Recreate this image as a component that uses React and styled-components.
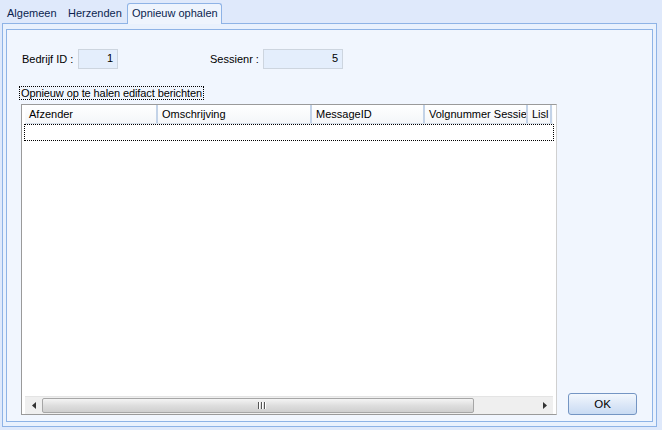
import styled, { createGlobalStyle } from 'styled-components';

const GlobalStyle = createGlobalStyle`
    html, body {
        margin: 0;
        padding: 0;
        background: #dfe9fb;
    }
    body {
        font-family: "Liberation Sans", Arial, sans-serif;
        font-size: 11px;
        color: #000;
    }
`;

const borderBlue = '#8eb3e6';

const Window = styled.div`
    width: 662px;
    height: 430px;
    background: #dfe9fb;
    display: flex;
    flex-direction: column;
    font-family: "Liberation Sans", Arial, sans-serif;
    font-size: 11px;
`;

const TabStrip = styled.div`
    height: 23px;
    display: flex;
    align-items: flex-end;
    padding-left: 2px;
    position: relative;
    z-index: 1;
`;

const Tab = styled.div`
    width: ${(p) => p.$width}px;
    height: ${(p) => (p.$active ? '21px' : '19px')};
    box-sizing: border-box;
    padding: ${(p) => (p.$active ? '3px 0 0 4px' : '2px 0 0 4px')};
    border: 1px solid ${(p) => (p.$active ? borderBlue : 'transparent')};
    border-bottom: none;
    border-radius: 3px 3px 0 0;
    background: ${(p) => (p.$active ? '#eef4fd' : 'transparent')};
    margin-bottom: ${(p) => (p.$active ? '-1px' : '0')};
    color: #0b1f4f;
    white-space: nowrap;
    font-size: 11px;
`;

const TabPage = styled.div`
    margin: 0 5px 3px 2px;
    flex: 1;
    border: 1px solid ${borderBlue};
    background: #e9f1fd;
    padding: 5px 3px 4px 3px;
    display: flex;
`;

const Panel = styled.div`
    flex: 1;
    border: 1px solid ${borderBlue};
    background: #f1f6fe;
    display: flex;
    flex-direction: column;
    padding: 19px 0 6px 12px;
`;

const FieldRow = styled.div`
    display: flex;
    align-items: center;
    height: 20px;
    padding-left: 3px;
`;

const Label = styled.span`
    width: ${(p) => p.$width}px;
    white-space: nowrap;
`;

const ValueBox = styled.div`
    width: ${(p) => p.$width}px;
    height: 20px;
    box-sizing: border-box;
    border: 1px solid #cdd5df;
    background: #e4eefc;
    text-align: right;
    padding: 2px 4px 0 0;
    margin-right: ${(p) => p.$gap || 0}px;
`;

const GroupLabel = styled.div`
    margin-top: 17px;
    align-self: flex-start;
    border: 1px dotted #000;
    padding: 0 1px;
    height: 12px;
    line-height: 12px;
    white-space: nowrap;
    letter-spacing: -0.1px;
`;

const Body = styled.div`
    flex: 1;
    display: flex;
    margin-top: 4px;
    padding-left: 2px;
`;

const ListView = styled.div`
    width: 536px;
    box-sizing: border-box;
    border: 1px solid #9a9a9a;
    border-right-color: #d0d0d0;
    background: #fff;
    display: flex;
    flex-direction: column;
`;

const HeaderRow = styled.div`
    display: flex;
    height: 18px;
    border-bottom: 1px solid #d5dde8;
    margin: 0 3px 0 3px;
    background: linear-gradient(#ffffff, #f4f6f9);
`;

const HeaderCell = styled.div`
    width: ${(p) => p.$width}px;
    box-sizing: border-box;
    padding: 3px 0 0 4px;
    border-right: 2px solid #c3d3e8;
    white-space: nowrap;
    overflow: hidden;
`;

const Rows = styled.div`
    flex: 1;
    padding: 0 2px 0 2px;
`;

const FocusRow = styled.div`
    height: 15px;
    border: 1px dotted #000;
`;

const HScroll = styled.div`
    height: 17px;
    display: flex;
    align-items: center;
    background: #efefef;
    border-top: 1px solid #e4e4e4;
    margin: 0 3px 0 3px;
`;

const Arrow = styled.div`
    width: 17px;
    height: 17px;
    display: flex;
    align-items: center;
    justify-content: center;
`;

const Track = styled.div`
    flex: 1;
    height: 15px;
    display: flex;
`;

const Thumb = styled.div`
    width: 432px;
    box-sizing: border-box;
    border: 1px solid #a6a6a6;
    border-radius: 2px;
    background: linear-gradient(#f4f4f4, #dedede 50%, #cfcfcf);
    display: flex;
    align-items: center;
    justify-content: flex-end;
    padding-right: 208px;
`;

const Grip = styled.div`
    display: flex;
    & > span {
        width: 1px;
        height: 7px;
        background: #555;
        box-shadow: 1px 0 0 #fff;
    }
    & > span + span {
        margin-left: 2px;
    }
`;

const Side = styled.div`
    flex: 1;
    display: flex;
    align-items: flex-end;
    padding: 0 0 0 11px;
`;

const Button = styled.button`
    width: 69px;
    height: 22px;
    border: 1px solid #7495c3;
    border-radius: 3px;
    background: linear-gradient(#f3f7fd, #dde8f8 50%, #c9dbf3);
    font-family: "Liberation Sans", Arial, sans-serif;
    font-size: 11.5px;
    color: #000;
    padding: 0;
`;

const tabs = [
    { title: 'Algemeen', width: 61 },
    { title: 'Herzenden', width: 64 },
    { title: 'Opnieuw ophalen', width: 95, active: true },
];

const columns = [
    { title: 'Afzender', width: 133 },
    { title: 'Omschrijving', width: 154 },
    { title: 'MessageID', width: 113 },
    { title: 'Volgnummer Sessie', width: 103 },
    { title: 'Lisl', width: 24 },
];

export default function App() {
    return (
        <Window>
            <GlobalStyle />
            <TabStrip>
                {tabs.map((tab) => (
                    <Tab key={tab.title} $width={tab.width} $active={tab.active}>
                        {tab.title}
                    </Tab>
                ))}
            </TabStrip>
            <TabPage>
                <Panel>
                    <FieldRow>
                        <Label $width={56}>Bedrijf ID :</Label>
                        <ValueBox $width={40} $gap={92}>1</ValueBox>
                        <Label $width={53}>Sessienr :</Label>
                        <ValueBox $width={80}>5</ValueBox>
                    </FieldRow>
                    <GroupLabel>Opnieuw op te halen edifact berichten</GroupLabel>
                    <Body>
                        <ListView>
                            <HeaderRow>
                                {columns.map((col) => (
                                    <HeaderCell key={col.title} $width={col.width}>
                                        {col.title}
                                    </HeaderCell>
                                ))}
                            </HeaderRow>
                            <Rows>
                                <FocusRow />
                            </Rows>
                            <HScroll>
                                <Arrow>
                                    <svg width="4" height="7" viewBox="0 0 4 7">
                                        <path d="M4 0 L0 3.5 L4 7 Z" fill="#333" />
                                    </svg>
                                </Arrow>
                                <Track>
                                    <Thumb>
                                        <Grip>
                                            <span />
                                            <span />
                                            <span />
                                        </Grip>
                                    </Thumb>
                                </Track>
                                <Arrow>
                                    <svg width="4" height="7" viewBox="0 0 4 7">
                                        <path d="M0 0 L4 3.5 L0 7 Z" fill="#333" />
                                    </svg>
                                </Arrow>
                            </HScroll>
                        </ListView>
                        <Side>
                            <Button>OK</Button>
                        </Side>
                    </Body>
                </Panel>
            </TabPage>
        </Window>
    );
}
